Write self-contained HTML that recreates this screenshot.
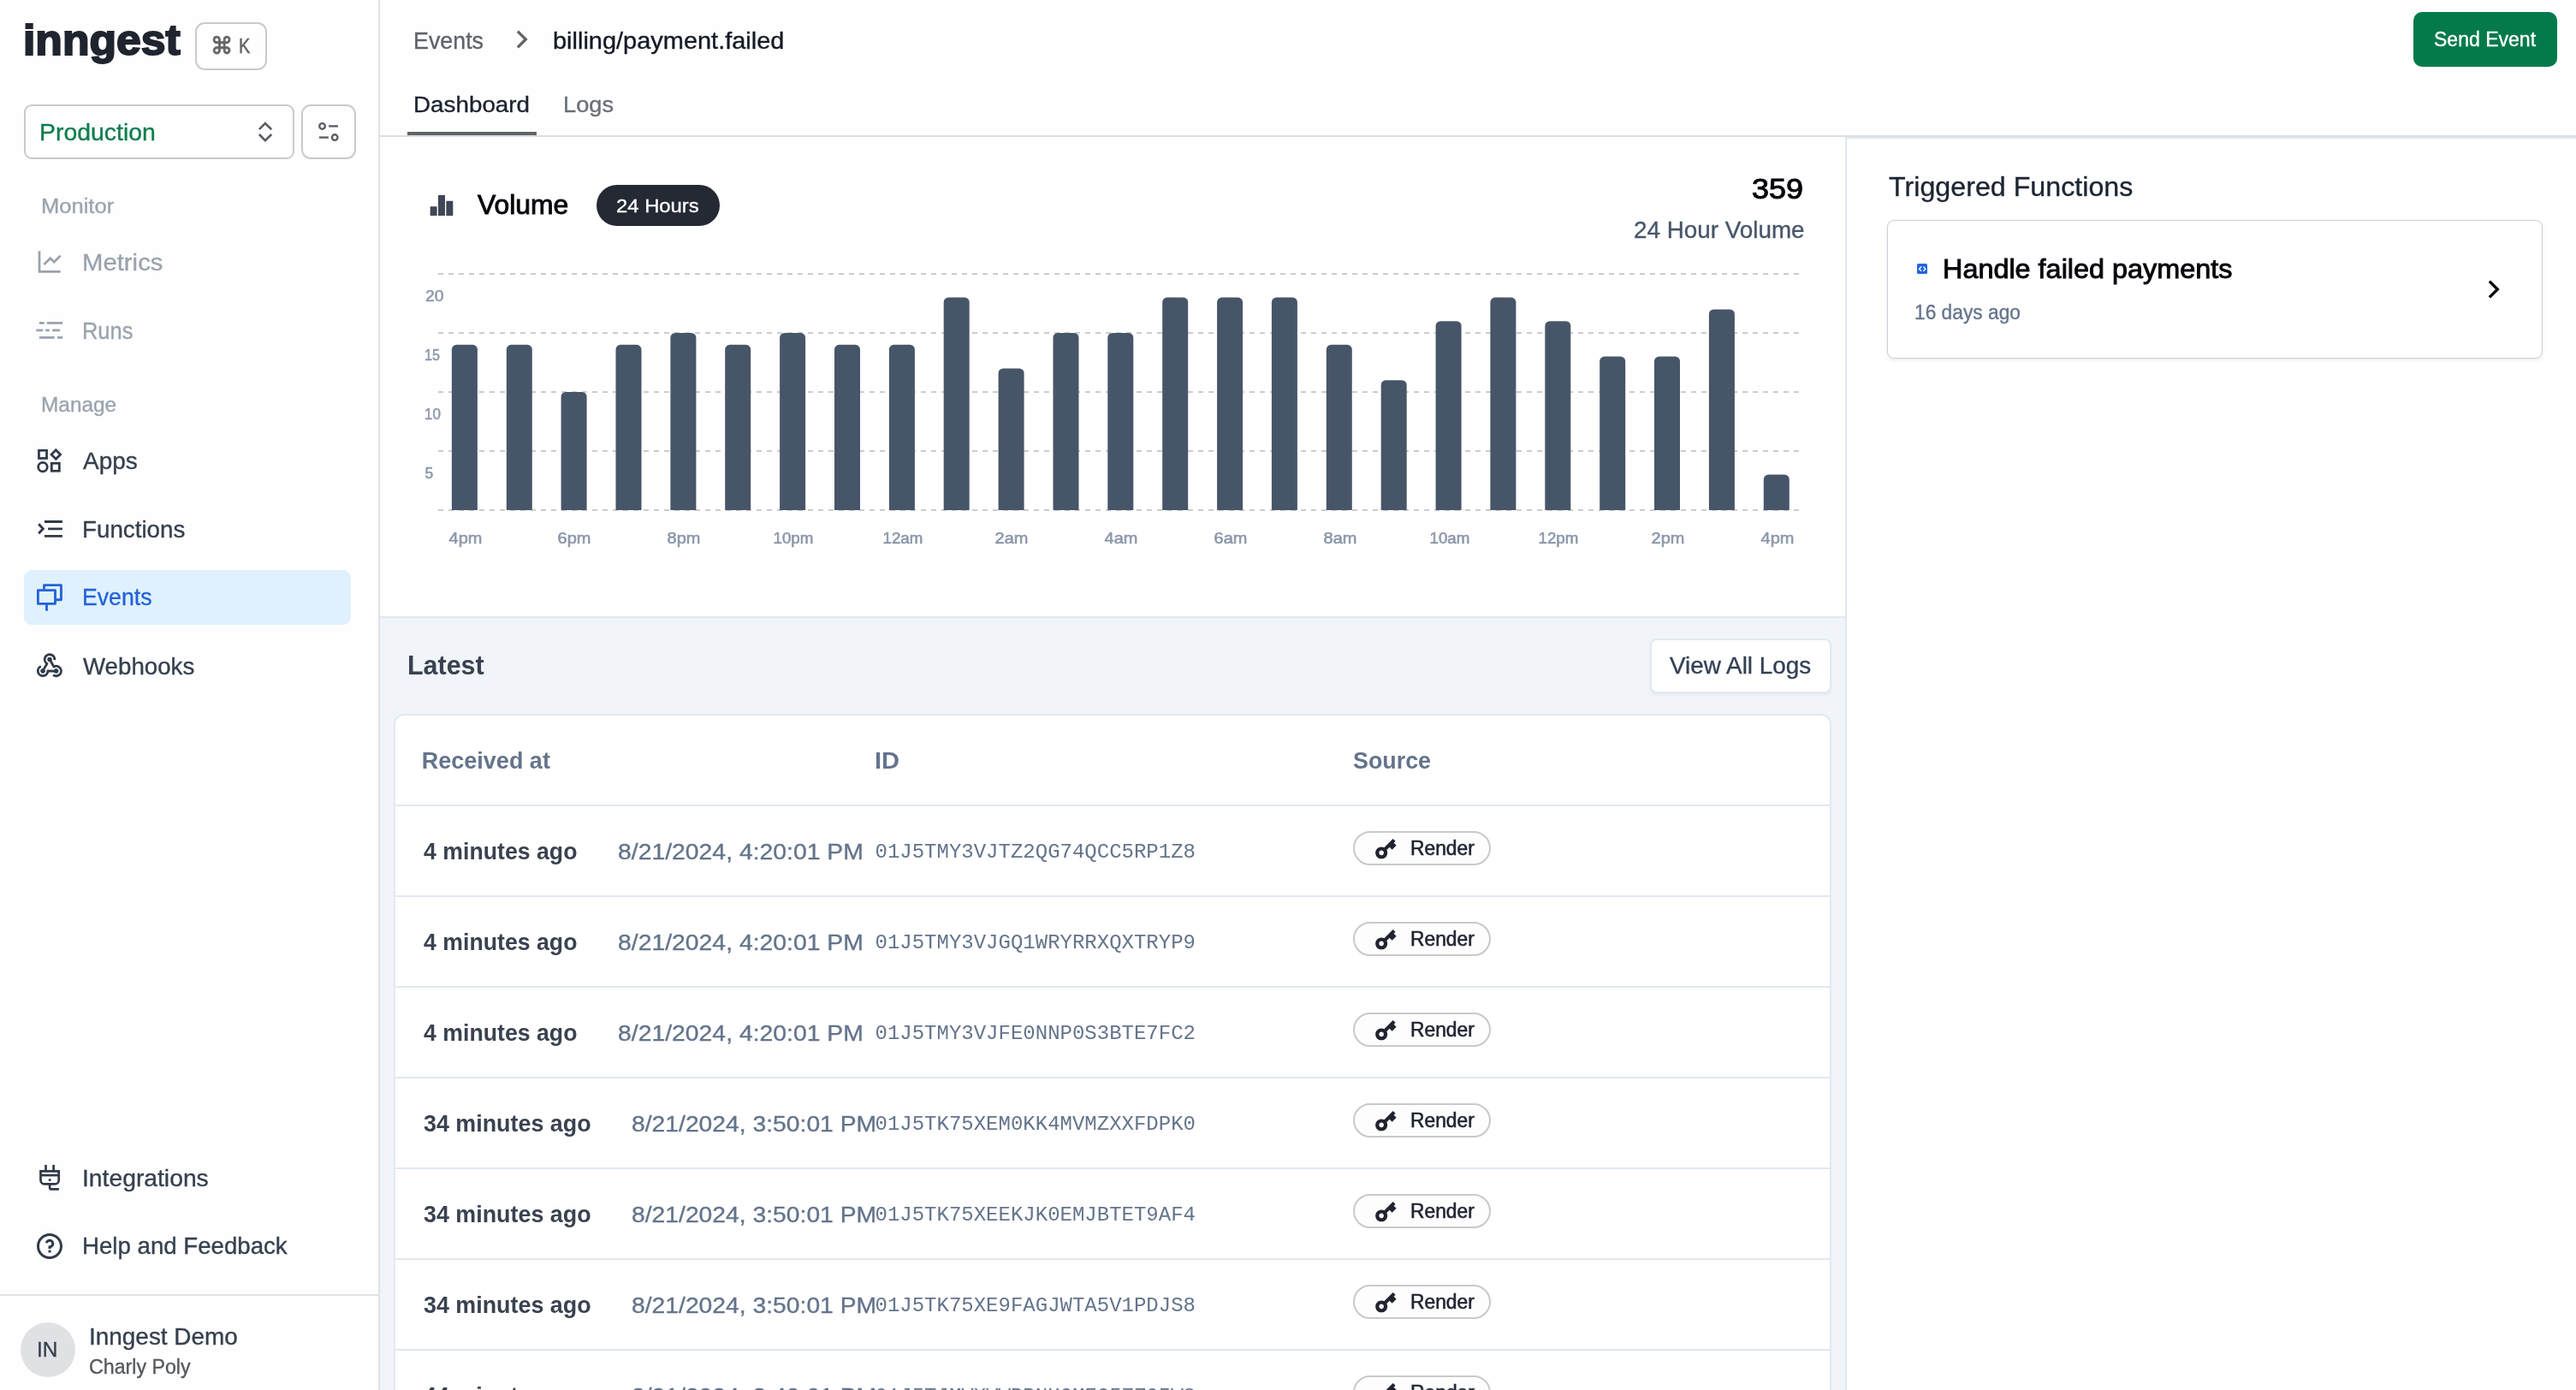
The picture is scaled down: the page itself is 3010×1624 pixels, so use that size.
<!DOCTYPE html>
<html lang="en"><head><meta charset="utf-8"><title>billing/payment.failed - Events - Inngest</title>
<style>
html,body{margin:0;padding:0}
body{width:3010px;height:1624px;position:relative;overflow:hidden;background:#fff;font-family:"Liberation Sans",sans-serif;-webkit-font-smoothing:antialiased}
.t{position:absolute;white-space:pre;line-height:1;margin:0;font-weight:400;transform-origin:0 50%}
.a{position:absolute;box-sizing:border-box}
svg{position:absolute;overflow:visible}
</style></head>
<body>
<div id="app" style="position:absolute;left:0;top:0;width:3010px;height:1624px;will-change:transform">
<aside>
<div class="a" style="left:0;top:0;width:444px;height:1624px;background:#fefefe;border-right:2px solid #dfe1e4"></div>
<div class="a" style="left:228px;top:26px;width:84px;height:56px;border:2px solid #c9cacd;border-radius:11px;background:#fefefe"></div>
<div class="a" style="left:28px;top:122px;width:316px;height:64px;border:2px solid #c9cacd;border-radius:9px;background:#fefefe"></div>
<svg style="left:298px;top:140px" width="24" height="28" viewBox="0 0 24 28" fill="none" stroke="#585c63" stroke-width="2.6"><path d="M4.9 11.2L11.9 4L19.2 11.2M4.9 17L11.9 24.2L19.2 17"/></svg>
<div class="a" style="left:352px;top:122px;width:64px;height:64px;border:2px solid #c9cacd;border-radius:11px;background:#fefefe"></div>
<svg style="left:370px;top:140px" width="28" height="28" viewBox="0 0 28 28" fill="none" stroke="#5a5e66" stroke-width="2.4"><circle cx="6.55" cy="7.4" r="3.3"/><path d="M14.1 7.4H25"/><circle cx="21.2" cy="20.6" r="3.3"/><path d="M3 20.6H13.9"/></svg>
<svg style="left:40px;top:288px;color:#9ba2ad" width="36" height="36" viewBox="0 0 36 36" fill="#9ba2ad"><g fill="none" stroke="currentColor" stroke-width="2.75"><path d="M6 5.2V29.3H30.7"/><path d="M11.4 21L18.8 13.7L23.2 18.1L30.6 10.8"/></g></svg>
<svg style="left:40px;top:368px;color:#9ba2ad" width="36" height="36" viewBox="0 0 36 36" fill="#9ba2ad"><g fill="none" stroke="currentColor" stroke-width="2.7"><path d="M5.8 9.4H11.7M14.8 9.4H33.2M2.3 17.9H10.2M13.2 17.9H17.8M21.2 17.9H30M5.8 26.4H23.7M27 26.4H33.2"/></g></svg>
<svg style="left:40px;top:520px;color:#303a48" width="36" height="36" viewBox="0 0 36 36" fill="#303a48"><g fill="none" stroke="currentColor" stroke-width="2.75"><rect x="5.45" y="6.25" width="9.1" height="9.2"/><path d="M25.3 5.7L30.6 11L25.3 16.3L20 11Z"/><circle cx="9.95" cy="25.6" r="5.3"/><rect x="20.3" y="21.25" width="9" height="9"/></g></svg>
<svg style="left:40px;top:600px;color:#303a48" width="36" height="36" viewBox="0 0 36 36" fill="#303a48"><g fill="none" stroke="currentColor" stroke-width="2.9"><path d="M12 9.45H32.9M16.1 17.9H32.9M12 26.4H32.9M5.2 12.3L10.3 17.8L5.2 23.3"/></g></svg>
<div class="a" style="left:28px;top:666px;width:382px;height:64px;border-radius:9px;background:#e0f1fe"></div>
<svg style="left:40px;top:680px;color:#2463d8" width="36" height="36" viewBox="0 0 36 36" fill="#2463d8"><g fill="none" stroke="currentColor" stroke-width="2.85" stroke-linejoin="round"><path d="M11.5 8.4V3.6H31.45V20.7H25.6"/><rect x="4.4" y="9.6" width="20.1" height="15.8"/><path d="M14.5 25.4V33.7"/></g></svg>
<svg style="left:40px;top:760px;color:#303a48" width="36" height="36" viewBox="0 0 36 36" fill="#303a48"><g fill="none" stroke="currentColor" stroke-width="2.8" stroke-linejoin="round"><path d="M23.76 11.1A5.8 5.8 0 1 0 15.01 15.37L9.9 23.9"/><circle cx="18" cy="10.4" r="2.75" fill="currentColor" stroke="none"/><g transform="rotate(-120 17.9 19.4)"><path d="M23.76 11.1A5.8 5.8 0 1 0 15.01 15.37L9.9 23.9"/><circle cx="18" cy="10.4" r="2.75" fill="currentColor" stroke="none"/></g><g transform="rotate(120 17.9 19.4)"><path d="M23.76 11.1A5.8 5.8 0 1 0 15.01 15.37L9.9 23.9"/><circle cx="18" cy="10.4" r="2.75" fill="currentColor" stroke="none"/></g></g></svg>
<svg style="left:40px;top:1358px;color:#303a48" width="36" height="36" viewBox="0 0 36 36" fill="#303a48"><g fill="none" stroke="currentColor" stroke-width="2.7"><path d="M13.5 3.1V10.4M22.6 3.1V10.4"/><path d="M7.5 10.4H28.7V20.9A4.5 4.5 0 0 1 24.2 25.4H12A4.5 4.5 0 0 1 7.5 20.9Z"/><path d="M7.5 15.1H28.7"/><path d="M18.16 25.4V29.9A1.5 1.5 0 0 0 19.66 31.4H28.9"/><circle cx="18.16" cy="20.4" r="1.5" fill="currentColor" stroke="none"/></g></svg>
<svg style="left:40px;top:1438px;color:#303a48" width="36" height="36" viewBox="0 0 36 36" fill="#303a48"><g transform="scale(1.5)"><path d="M12 22C6.47715 22 2 17.5228 2 12C2 6.47715 6.47715 2 12 2C17.5228 2 22 6.47715 22 12C22 17.5228 17.5228 22 12 22ZM12 20C16.4183 20 20 16.4183 20 12C20 7.58172 16.4183 4 12 4C7.58172 4 4 7.58172 4 12C4 16.4183 7.58172 20 12 20ZM11 15H13V17H11V15ZM13 13.3551V14H11V12.5C11 11.9477 11.4477 11.5 12 11.5C12.8284 11.5 13.5 10.8284 13.5 10C13.5 9.17157 12.8284 8.5 12 8.5C11.2723 8.5 10.6656 9.01823 10.5288 9.70577L8.56731 9.31346C8.88637 7.70919 10.302 6.5 12 6.5C13.933 6.5 15.5 8.067 15.5 10C15.5 11.5855 14.4457 12.9248 13 13.3551Z"/></g></svg>
<div class="a" style="left:0;top:1512px;width:442px;height:2px;background:#e1e3e6"></div>
<div class="a" style="left:24px;top:1545px;width:64px;height:64px;border-radius:32px;background:#e0e1e4"></div>
<span class="t" style="left:26.5px;top:22px;font-size:50px;color:#20242f;font-weight:700;transform:scaleX(1.0335);-webkit-text-stroke:2.0px #20242f;">inngest</span>
<span class="t" style="left:245.5px;top:40px;font-size:27.5px;color:#646569;font-family:'DejaVu Sans', 'Liberation Sans', sans-serif;transform:scaleX(0.9545);-webkit-text-stroke:0.9px #646569;">⌘</span>
<span class="t" style="left:279.3px;top:42px;font-size:23.77px;color:#646569;transform:scaleX(0.84);-webkit-text-stroke:0.5px #646569;">K</span>
<span class="t" style="left:45.8px;top:141px;font-size:27.16px;color:#0b7d4d;transform:scaleX(1.046);-webkit-text-stroke:0.35px #0b7d4d;">Production</span>
<h4 class="t" style="left:48.4px;top:230px;font-size:23.28px;color:#9ba3ae;transform:scaleX(1.0979);-webkit-text-stroke:0.35px #9ba3ae;">Monitor</h4>
<a class="t" style="left:96.0px;top:293px;font-size:27.16px;color:#9ba3ae;transform:scaleX(1.0792);-webkit-text-stroke:0.35px #9ba3ae;">Metrics</a>
<a class="t" style="left:96.3px;top:373px;font-size:27.16px;color:#9ba3ae;transform:scaleX(0.9364);-webkit-text-stroke:0.35px #9ba3ae;">Runs</a>
<h4 class="t" style="left:48.4px;top:462px;font-size:23.28px;color:#9ba3ae;transform:scaleX(1.0489);-webkit-text-stroke:0.35px #9ba3ae;">Manage</h4>
<a class="t" style="left:96.8px;top:525px;font-size:27.16px;color:#36404e;transform:scaleX(1.0315);-webkit-text-stroke:0.35px #36404e;">Apps</a>
<a class="t" style="left:96.1px;top:605px;font-size:27.16px;color:#36404e;transform:scaleX(1.0217);-webkit-text-stroke:0.35px #36404e;">Functions</a>
<a class="t" style="left:96.2px;top:684px;font-size:27.16px;color:#2463d8;transform:scaleX(0.9815);-webkit-text-stroke:0.35px #2463d8;">Events</a>
<a class="t" style="left:97.2px;top:765px;font-size:27.16px;color:#36404e;transform:scaleX(1.019);-webkit-text-stroke:0.35px #36404e;">Webhooks</a>
<a class="t" style="left:95.7px;top:1363px;font-size:27.16px;color:#36404e;transform:scaleX(1.0411);-webkit-text-stroke:0.35px #36404e;">Integrations</a>
<a class="t" style="left:95.7px;top:1442px;font-size:27.16px;color:#36404e;transform:scaleX(1.0176);-webkit-text-stroke:0.35px #36404e;">Help and Feedback</a>
<span class="t" style="left:43.3px;top:1565px;font-size:23.86px;color:#36404e;transform:scaleX(1.0204);-webkit-text-stroke:0.35px #36404e;">IN</span>
<span class="t" style="left:104.1px;top:1548px;font-size:27.16px;color:#36404e;transform:scaleX(1.0283);-webkit-text-stroke:0.35px #36404e;">Inngest Demo</span>
<span class="t" style="left:104.3px;top:1585px;font-size:24.25px;color:#55585e;transform:scaleX(0.9563);-webkit-text-stroke:0.35px #55585e;">Charly Poly</span>
</aside>
<header>
<div class="a" style="left:444px;top:0;width:2566px;height:160px;background:#fefefe;border-bottom:2px solid #dcdee1"></div>
<svg style="left:589.7px;top:25.7px" width="40" height="40" viewBox="0 0 24 24" fill="#626367"><path d="M13.1717 12.0007L8.22192 7.05093L9.63614 5.63672L16.0001 12.0007L9.63614 18.3646L8.22192 16.9504L13.1717 12.0007Z"/></svg>
<div class="a" style="left:476px;top:154px;width:151px;height:4px;background:#606368"></div>
<div class="a" style="left:2820px;top:14px;width:168px;height:64px;border-radius:10px;background:#047a4b"></div>
<a class="t" style="left:483.4px;top:34px;font-size:27.16px;color:#5e636b;transform:scaleX(0.9877);-webkit-text-stroke:0.35px #5e636b;">Events</a>
<span class="t" style="left:645.6px;top:34px;font-size:27.16px;color:#141a26;transform:scaleX(1.0662);-webkit-text-stroke:0.35px #141a26;">billing/payment.failed</span>
<a class="t" style="left:483.3px;top:109px;font-size:26.19px;color:#1c2230;transform:scaleX(1.0618);-webkit-text-stroke:0.35px #1c2230;">Dashboard</a>
<a class="t" style="left:658.1px;top:109px;font-size:26.19px;color:#6a6f78;transform:scaleX(1.0394);-webkit-text-stroke:0.35px #6a6f78;">Logs</a>
<a class="t" style="left:2844.2px;top:34px;font-size:23.77px;color:#ffffff;transform:scaleX(0.9687);-webkit-text-stroke:0.35px #ffffff;">Send Event</a>
</header>
<main>
<section>
<div class="a" style="left:444px;top:160px;width:1712px;height:562px;background:#fff;border-bottom:2px solid #e2e8f0"></div>
<svg style="left:500px;top:224px" width="32" height="32" viewBox="0 0 24 24" fill="#3f4756"><path d="M2 13H8V21H2V13ZM9 3H15V21H9V3ZM16 8H22V21H16V8Z"/></svg>
<div class="a" style="left:697px;top:216px;width:144px;height:48px;border-radius:24px;background:#242934"></div>
<svg class="chart" style="left:0;top:0" width="3010" height="700" viewBox="0 0 3010 700" role="img" aria-label="Event volume over the last 24 hours">
<g stroke="#cccccc" stroke-width="2" stroke-dasharray="6 6" fill="none"><line x1="512" x2="2102" y1="320" y2="320"/><line x1="512" x2="2102" y1="389" y2="389"/><line x1="512" x2="2102" y1="458" y2="458"/><line x1="512" x2="2102" y1="527" y2="527"/><line x1="512" x2="2102" y1="596" y2="596"/></g>
<g fill="#475569"><path d="M527.9 596V408.3a5.5 5.5 0 0 1 5.5 -5.5h19.0a5.5 5.5 0 0 1 5.5 5.5V596z"/><path d="M591.8 596V408.3a5.5 5.5 0 0 1 5.5 -5.5h19.0a5.5 5.5 0 0 1 5.5 5.5V596z"/><path d="M655.6 596V463.5a5.5 5.5 0 0 1 5.5 -5.5h19.0a5.5 5.5 0 0 1 5.5 5.5V596z"/><path d="M719.5 596V408.3a5.5 5.5 0 0 1 5.5 -5.5h19.0a5.5 5.5 0 0 1 5.5 5.5V596z"/><path d="M783.4 596V394.5a5.5 5.5 0 0 1 5.5 -5.5h19.0a5.5 5.5 0 0 1 5.5 5.5V596z"/><path d="M847.2 596V408.3a5.5 5.5 0 0 1 5.5 -5.5h19.0a5.5 5.5 0 0 1 5.5 5.5V596z"/><path d="M911.1 596V394.5a5.5 5.5 0 0 1 5.5 -5.5h19.0a5.5 5.5 0 0 1 5.5 5.5V596z"/><path d="M975.0 596V408.3a5.5 5.5 0 0 1 5.5 -5.5h19.0a5.5 5.5 0 0 1 5.5 5.5V596z"/><path d="M1038.9 596V408.3a5.5 5.5 0 0 1 5.5 -5.5h19.0a5.5 5.5 0 0 1 5.5 5.5V596z"/><path d="M1102.7 596V353.1a5.5 5.5 0 0 1 5.5 -5.5h19.0a5.5 5.5 0 0 1 5.5 5.5V596z"/><path d="M1166.6 596V435.9a5.5 5.5 0 0 1 5.5 -5.5h19.0a5.5 5.5 0 0 1 5.5 5.5V596z"/><path d="M1230.5 596V394.5a5.5 5.5 0 0 1 5.5 -5.5h19.0a5.5 5.5 0 0 1 5.5 5.5V596z"/><path d="M1294.3 596V394.5a5.5 5.5 0 0 1 5.5 -5.5h19.0a5.5 5.5 0 0 1 5.5 5.5V596z"/><path d="M1358.2 596V353.1a5.5 5.5 0 0 1 5.5 -5.5h19.0a5.5 5.5 0 0 1 5.5 5.5V596z"/><path d="M1422.1 596V353.1a5.5 5.5 0 0 1 5.5 -5.5h19.0a5.5 5.5 0 0 1 5.5 5.5V596z"/><path d="M1485.9 596V353.1a5.5 5.5 0 0 1 5.5 -5.5h19.0a5.5 5.5 0 0 1 5.5 5.5V596z"/><path d="M1549.8 596V408.3a5.5 5.5 0 0 1 5.5 -5.5h19.0a5.5 5.5 0 0 1 5.5 5.5V596z"/><path d="M1613.7 596V449.7a5.5 5.5 0 0 1 5.5 -5.5h19.0a5.5 5.5 0 0 1 5.5 5.5V596z"/><path d="M1677.6 596V380.7a5.5 5.5 0 0 1 5.5 -5.5h19.0a5.5 5.5 0 0 1 5.5 5.5V596z"/><path d="M1741.4 596V353.1a5.5 5.5 0 0 1 5.5 -5.5h19.0a5.5 5.5 0 0 1 5.5 5.5V596z"/><path d="M1805.3 596V380.7a5.5 5.5 0 0 1 5.5 -5.5h19.0a5.5 5.5 0 0 1 5.5 5.5V596z"/><path d="M1869.2 596V422.1a5.5 5.5 0 0 1 5.5 -5.5h19.0a5.5 5.5 0 0 1 5.5 5.5V596z"/><path d="M1933.0 596V422.1a5.5 5.5 0 0 1 5.5 -5.5h19.0a5.5 5.5 0 0 1 5.5 5.5V596z"/><path d="M1996.9 596V366.9a5.5 5.5 0 0 1 5.5 -5.5h19.0a5.5 5.5 0 0 1 5.5 5.5V596z"/><path d="M2060.8 596V560.1a5.5 5.5 0 0 1 5.5 -5.5h19.0a5.5 5.5 0 0 1 5.5 5.5V596z"/></g>
</svg>
<h2 class="t" style="left:557.9px;top:224px;font-size:30.55px;color:#05070c;transform:scaleX(1.0436);-webkit-text-stroke:0.9px #05070c;">Volume</h2>
<span class="t" style="left:720.1px;top:229px;font-size:22.79px;color:#ffffff;transform:scaleX(1.0462);-webkit-text-stroke:0.35px #ffffff;">24 Hours</span>
<span class="t" style="left:2046.7px;top:204px;font-size:33.46px;color:#05070c;transform:scaleX(1.0754);-webkit-text-stroke:1.0px #05070c;">359</span>
<span class="t" style="left:1908.5px;top:255px;font-size:27.16px;color:#475569;transform:scaleX(1.025);-webkit-text-stroke:0.35px #475569;">24 Hour Volume</span>
<span class="t" style="left:496.6px;top:338px;font-size:17.5px;color:#8d98aa;transform:scaleX(1.1098);-webkit-text-stroke:0.5px #8d98aa;">20</span>
<span class="t" style="left:495.6px;top:407px;font-size:17.5px;color:#8d98aa;transform:scaleX(0.9248);-webkit-text-stroke:0.5px #8d98aa;">15</span>
<span class="t" style="left:495.6px;top:476px;font-size:17.5px;color:#8d98aa;transform:scaleX(0.9716);-webkit-text-stroke:0.5px #8d98aa;">10</span>
<span class="t" style="left:496.6px;top:545px;font-size:17.5px;color:#8d98aa;-webkit-text-stroke:0.5px #8d98aa;">5</span>
<span class="t" style="left:526.7px;top:621px;font-size:17.5px;color:#8d98aa;transform:scaleX(1.14);-webkit-text-stroke:0.6px #8d98aa;transform-origin:50% 50%;">4pm</span>
<span class="t" style="left:654.4px;top:621px;font-size:17.5px;color:#8d98aa;transform:scaleX(1.14);-webkit-text-stroke:0.6px #8d98aa;transform-origin:50% 50%;">6pm</span>
<span class="t" style="left:782.2px;top:621px;font-size:17.5px;color:#8d98aa;transform:scaleX(1.14);-webkit-text-stroke:0.6px #8d98aa;transform-origin:50% 50%;">8pm</span>
<span class="t" style="left:905.0px;top:621px;font-size:17.5px;color:#8d98aa;transform:scaleX(1.07);-webkit-text-stroke:0.6px #8d98aa;transform-origin:50% 50%;">10pm</span>
<span class="t" style="left:1032.8px;top:621px;font-size:17.5px;color:#8d98aa;transform:scaleX(1.07);-webkit-text-stroke:0.6px #8d98aa;transform-origin:50% 50%;">12am</span>
<span class="t" style="left:1165.4px;top:621px;font-size:17.5px;color:#8d98aa;transform:scaleX(1.14);-webkit-text-stroke:0.6px #8d98aa;transform-origin:50% 50%;">2am</span>
<span class="t" style="left:1293.1px;top:621px;font-size:17.5px;color:#8d98aa;transform:scaleX(1.14);-webkit-text-stroke:0.6px #8d98aa;transform-origin:50% 50%;">4am</span>
<span class="t" style="left:1420.9px;top:621px;font-size:17.5px;color:#8d98aa;transform:scaleX(1.14);-webkit-text-stroke:0.6px #8d98aa;transform-origin:50% 50%;">6am</span>
<span class="t" style="left:1548.6px;top:621px;font-size:17.5px;color:#8d98aa;transform:scaleX(1.14);-webkit-text-stroke:0.6px #8d98aa;transform-origin:50% 50%;">8am</span>
<span class="t" style="left:1671.5px;top:621px;font-size:17.5px;color:#8d98aa;transform:scaleX(1.07);-webkit-text-stroke:0.6px #8d98aa;transform-origin:50% 50%;">10am</span>
<span class="t" style="left:1799.2px;top:621px;font-size:17.5px;color:#8d98aa;transform:scaleX(1.07);-webkit-text-stroke:0.6px #8d98aa;transform-origin:50% 50%;">12pm</span>
<span class="t" style="left:1931.8px;top:621px;font-size:17.5px;color:#8d98aa;transform:scaleX(1.14);-webkit-text-stroke:0.6px #8d98aa;transform-origin:50% 50%;">2pm</span>
<span class="t" style="left:2059.6px;top:621px;font-size:17.5px;color:#8d98aa;transform:scaleX(1.14);-webkit-text-stroke:0.6px #8d98aa;transform-origin:50% 50%;">4pm</span>
</section>
<section>
<div class="a" style="left:444px;top:722px;width:1712px;height:902px;background:#f1f5f9"></div>
<div class="a" style="left:1928px;top:746px;width:212px;height:64px;border:2px solid #e3e9f1;border-radius:8px;background:#fff;box-shadow:0 2px 3px rgba(15,23,42,.05)"></div>
<h2 class="t" style="left:475.9px;top:762px;font-size:30.5px;color:#3a4250;font-weight:700;">Latest</h2>
<a class="t" style="left:1950.9px;top:764px;font-size:27.16px;color:#334155;transform:scaleX(1.0259);-webkit-text-stroke:0.35px #334155;">View All Logs</a>
<div class="a" style="left:460px;top:834px;width:1680px;height:820px;border:2px solid #e2e8f0;border-radius:12px;background:#fff"></div>
<div class="a" style="left:462px;top:940px;width:1676px;height:2px;background:#e2e8f0"></div>
<span class="t" style="left:492.8px;top:876px;font-size:27px;color:#64748b;font-weight:700;">Received at</span>
<span class="t" style="left:1022.4px;top:876px;font-size:27px;color:#64748b;font-weight:700;transform:scaleX(1.0784);">ID</span>
<span class="t" style="left:1580.6px;top:876px;font-size:27px;color:#64748b;font-weight:700;transform:scaleX(0.9943);">Source</span>
<div class="row">
<div class="a" style="left:462px;top:1046px;width:1676px;height:2px;background:#e2e8f0"></div>
<div class="a" style="left:1581px;top:971px;width:160.5px;height:40px;border:2px solid #c8c9cc;border-radius:20px;background:#fdfdfe"></div>
<svg style="left:1602.8px;top:973.8px" width="33.5" height="33.5" viewBox="0 0 24 24" fill="#20242f"><path d="M10.3126 11.5656L17.6568 4.22144L19.7782 6.34276L18.3639 7.75697L20.4853 9.87829L16.9497 13.4138L14.8284 11.2925L12.4339 13.687C12.7956 14.3926 13 15.1925 13 16.04C13 18.8014 10.7614 21.04 8 21.04C5.23858 21.04 3 18.8014 3 16.04C3 13.2786 5.23858 11.04 8 11.04C8.84751 11.04 9.64741 11.2444 10.3126 11.5656ZM8 18.04C9.10457 18.04 10 17.1446 10 16.04C10 14.9354 9.10457 14.04 8 14.04C6.89543 14.04 6 14.9354 6 16.04C6 17.1446 6.89543 18.04 8 18.04Z"/></svg>
<span class="t" style="left:494.7px;top:982px;font-size:27px;color:#3a4250;font-weight:700;transform:scaleX(0.9887);">4 minutes ago</span>
<span class="t" style="left:722.2px;top:982px;font-size:26.58px;color:#64748b;transform:scaleX(1.0668);-webkit-text-stroke:0.35px #64748b;">8/21/2024, 4:20:01 PM</span>
<span class="t" style="left:1022.5px;top:984px;font-size:24px;color:#64748b;font-family:'Liberation Mono', monospace;">01J5TMY3VJTZ2QG74QCC5RP1Z8</span>
<span class="t" style="left:1648.1px;top:980px;font-size:23.28px;color:#1f2430;transform:scaleX(0.9807);-webkit-text-stroke:0.6px #1f2430;">Render</span>
</div><div class="row">
<div class="a" style="left:462px;top:1152px;width:1676px;height:2px;background:#e2e8f0"></div>
<div class="a" style="left:1581px;top:1077px;width:160.5px;height:40px;border:2px solid #c8c9cc;border-radius:20px;background:#fdfdfe"></div>
<svg style="left:1602.8px;top:1079.8px" width="33.5" height="33.5" viewBox="0 0 24 24" fill="#20242f"><path d="M10.3126 11.5656L17.6568 4.22144L19.7782 6.34276L18.3639 7.75697L20.4853 9.87829L16.9497 13.4138L14.8284 11.2925L12.4339 13.687C12.7956 14.3926 13 15.1925 13 16.04C13 18.8014 10.7614 21.04 8 21.04C5.23858 21.04 3 18.8014 3 16.04C3 13.2786 5.23858 11.04 8 11.04C8.84751 11.04 9.64741 11.2444 10.3126 11.5656ZM8 18.04C9.10457 18.04 10 17.1446 10 16.04C10 14.9354 9.10457 14.04 8 14.04C6.89543 14.04 6 14.9354 6 16.04C6 17.1446 6.89543 18.04 8 18.04Z"/></svg>
<span class="t" style="left:494.7px;top:1088px;font-size:27px;color:#3a4250;font-weight:700;transform:scaleX(0.9887);">4 minutes ago</span>
<span class="t" style="left:722.2px;top:1088px;font-size:26.58px;color:#64748b;transform:scaleX(1.0668);-webkit-text-stroke:0.35px #64748b;">8/21/2024, 4:20:01 PM</span>
<span class="t" style="left:1022.5px;top:1090px;font-size:24px;color:#64748b;font-family:'Liberation Mono', monospace;">01J5TMY3VJGQ1WRYRRXQXTRYP9</span>
<span class="t" style="left:1648.1px;top:1086px;font-size:23.28px;color:#1f2430;transform:scaleX(0.9807);-webkit-text-stroke:0.6px #1f2430;">Render</span>
</div><div class="row">
<div class="a" style="left:462px;top:1258px;width:1676px;height:2px;background:#e2e8f0"></div>
<div class="a" style="left:1581px;top:1183px;width:160.5px;height:40px;border:2px solid #c8c9cc;border-radius:20px;background:#fdfdfe"></div>
<svg style="left:1602.8px;top:1185.8px" width="33.5" height="33.5" viewBox="0 0 24 24" fill="#20242f"><path d="M10.3126 11.5656L17.6568 4.22144L19.7782 6.34276L18.3639 7.75697L20.4853 9.87829L16.9497 13.4138L14.8284 11.2925L12.4339 13.687C12.7956 14.3926 13 15.1925 13 16.04C13 18.8014 10.7614 21.04 8 21.04C5.23858 21.04 3 18.8014 3 16.04C3 13.2786 5.23858 11.04 8 11.04C8.84751 11.04 9.64741 11.2444 10.3126 11.5656ZM8 18.04C9.10457 18.04 10 17.1446 10 16.04C10 14.9354 9.10457 14.04 8 14.04C6.89543 14.04 6 14.9354 6 16.04C6 17.1446 6.89543 18.04 8 18.04Z"/></svg>
<span class="t" style="left:494.7px;top:1194px;font-size:27px;color:#3a4250;font-weight:700;transform:scaleX(0.9887);">4 minutes ago</span>
<span class="t" style="left:722.2px;top:1194px;font-size:26.58px;color:#64748b;transform:scaleX(1.0668);-webkit-text-stroke:0.35px #64748b;">8/21/2024, 4:20:01 PM</span>
<span class="t" style="left:1022.5px;top:1196px;font-size:24px;color:#64748b;font-family:'Liberation Mono', monospace;">01J5TMY3VJFE0NNP0S3BTE7FC2</span>
<span class="t" style="left:1648.1px;top:1192px;font-size:23.28px;color:#1f2430;transform:scaleX(0.9807);-webkit-text-stroke:0.6px #1f2430;">Render</span>
</div><div class="row">
<div class="a" style="left:462px;top:1364px;width:1676px;height:2px;background:#e2e8f0"></div>
<div class="a" style="left:1581px;top:1289px;width:160.5px;height:40px;border:2px solid #c8c9cc;border-radius:20px;background:#fdfdfe"></div>
<svg style="left:1602.8px;top:1291.8px" width="33.5" height="33.5" viewBox="0 0 24 24" fill="#20242f"><path d="M10.3126 11.5656L17.6568 4.22144L19.7782 6.34276L18.3639 7.75697L20.4853 9.87829L16.9497 13.4138L14.8284 11.2925L12.4339 13.687C12.7956 14.3926 13 15.1925 13 16.04C13 18.8014 10.7614 21.04 8 21.04C5.23858 21.04 3 18.8014 3 16.04C3 13.2786 5.23858 11.04 8 11.04C8.84751 11.04 9.64741 11.2444 10.3126 11.5656ZM8 18.04C9.10457 18.04 10 17.1446 10 16.04C10 14.9354 9.10457 14.04 8 14.04C6.89543 14.04 6 14.9354 6 16.04C6 17.1446 6.89543 18.04 8 18.04Z"/></svg>
<span class="t" style="left:494.7px;top:1300px;font-size:27px;color:#3a4250;font-weight:700;transform:scaleX(0.9951);">34 minutes ago</span>
<span class="t" style="left:738.3px;top:1300px;font-size:26.58px;color:#64748b;transform:scaleX(1.0638);-webkit-text-stroke:0.35px #64748b;">8/21/2024, 3:50:01 PM</span>
<span class="t" style="left:1022.5px;top:1302px;font-size:24px;color:#64748b;font-family:'Liberation Mono', monospace;">01J5TK75XEM0KK4MVMZXXFDPK0</span>
<span class="t" style="left:1648.1px;top:1298px;font-size:23.28px;color:#1f2430;transform:scaleX(0.9807);-webkit-text-stroke:0.6px #1f2430;">Render</span>
</div><div class="row">
<div class="a" style="left:462px;top:1470px;width:1676px;height:2px;background:#e2e8f0"></div>
<div class="a" style="left:1581px;top:1395px;width:160.5px;height:40px;border:2px solid #c8c9cc;border-radius:20px;background:#fdfdfe"></div>
<svg style="left:1602.8px;top:1397.8px" width="33.5" height="33.5" viewBox="0 0 24 24" fill="#20242f"><path d="M10.3126 11.5656L17.6568 4.22144L19.7782 6.34276L18.3639 7.75697L20.4853 9.87829L16.9497 13.4138L14.8284 11.2925L12.4339 13.687C12.7956 14.3926 13 15.1925 13 16.04C13 18.8014 10.7614 21.04 8 21.04C5.23858 21.04 3 18.8014 3 16.04C3 13.2786 5.23858 11.04 8 11.04C8.84751 11.04 9.64741 11.2444 10.3126 11.5656ZM8 18.04C9.10457 18.04 10 17.1446 10 16.04C10 14.9354 9.10457 14.04 8 14.04C6.89543 14.04 6 14.9354 6 16.04C6 17.1446 6.89543 18.04 8 18.04Z"/></svg>
<span class="t" style="left:494.7px;top:1406px;font-size:27px;color:#3a4250;font-weight:700;transform:scaleX(0.9951);">34 minutes ago</span>
<span class="t" style="left:738.3px;top:1406px;font-size:26.58px;color:#64748b;transform:scaleX(1.0638);-webkit-text-stroke:0.35px #64748b;">8/21/2024, 3:50:01 PM</span>
<span class="t" style="left:1022.5px;top:1408px;font-size:24px;color:#64748b;font-family:'Liberation Mono', monospace;">01J5TK75XEEKJK0EMJBTET9AF4</span>
<span class="t" style="left:1648.1px;top:1404px;font-size:23.28px;color:#1f2430;transform:scaleX(0.9807);-webkit-text-stroke:0.6px #1f2430;">Render</span>
</div><div class="row">
<div class="a" style="left:462px;top:1576px;width:1676px;height:2px;background:#e2e8f0"></div>
<div class="a" style="left:1581px;top:1501px;width:160.5px;height:40px;border:2px solid #c8c9cc;border-radius:20px;background:#fdfdfe"></div>
<svg style="left:1602.8px;top:1503.8px" width="33.5" height="33.5" viewBox="0 0 24 24" fill="#20242f"><path d="M10.3126 11.5656L17.6568 4.22144L19.7782 6.34276L18.3639 7.75697L20.4853 9.87829L16.9497 13.4138L14.8284 11.2925L12.4339 13.687C12.7956 14.3926 13 15.1925 13 16.04C13 18.8014 10.7614 21.04 8 21.04C5.23858 21.04 3 18.8014 3 16.04C3 13.2786 5.23858 11.04 8 11.04C8.84751 11.04 9.64741 11.2444 10.3126 11.5656ZM8 18.04C9.10457 18.04 10 17.1446 10 16.04C10 14.9354 9.10457 14.04 8 14.04C6.89543 14.04 6 14.9354 6 16.04C6 17.1446 6.89543 18.04 8 18.04Z"/></svg>
<span class="t" style="left:494.7px;top:1512px;font-size:27px;color:#3a4250;font-weight:700;transform:scaleX(0.9951);">34 minutes ago</span>
<span class="t" style="left:738.3px;top:1512px;font-size:26.58px;color:#64748b;transform:scaleX(1.0638);-webkit-text-stroke:0.35px #64748b;">8/21/2024, 3:50:01 PM</span>
<span class="t" style="left:1022.5px;top:1514px;font-size:24px;color:#64748b;font-family:'Liberation Mono', monospace;">01J5TK75XE9FAGJWTA5V1PDJS8</span>
<span class="t" style="left:1648.1px;top:1510px;font-size:23.28px;color:#1f2430;transform:scaleX(0.9807);-webkit-text-stroke:0.6px #1f2430;">Render</span>
</div><div class="row">
<div class="a" style="left:462px;top:1682px;width:1676px;height:2px;background:#e2e8f0"></div>
<div class="a" style="left:1581px;top:1607px;width:160.5px;height:40px;border:2px solid #c8c9cc;border-radius:20px;background:#fdfdfe"></div>
<svg style="left:1602.8px;top:1609.8px" width="33.5" height="33.5" viewBox="0 0 24 24" fill="#20242f"><path d="M10.3126 11.5656L17.6568 4.22144L19.7782 6.34276L18.3639 7.75697L20.4853 9.87829L16.9497 13.4138L14.8284 11.2925L12.4339 13.687C12.7956 14.3926 13 15.1925 13 16.04C13 18.8014 10.7614 21.04 8 21.04C5.23858 21.04 3 18.8014 3 16.04C3 13.2786 5.23858 11.04 8 11.04C8.84751 11.04 9.64741 11.2444 10.3126 11.5656ZM8 18.04C9.10457 18.04 10 17.1446 10 16.04C10 14.9354 9.10457 14.04 8 14.04C6.89543 14.04 6 14.9354 6 16.04C6 17.1446 6.89543 18.04 8 18.04Z"/></svg>
<span class="t" style="left:494.7px;top:1618px;font-size:27px;color:#3a4250;font-weight:700;transform:scaleX(0.9951);">44 minutes ago</span>
<span class="t" style="left:738.3px;top:1618px;font-size:26.58px;color:#64748b;transform:scaleX(1.0638);-webkit-text-stroke:0.35px #64748b;">8/21/2024, 3:40:01 PM</span>
<span class="t" style="left:1022.5px;top:1620px;font-size:24px;color:#64748b;font-family:'Liberation Mono', monospace;">01J5TJMVXVWBBNHGMFG5ZZ05W8</span>
<span class="t" style="left:1648.1px;top:1616px;font-size:23.28px;color:#1f2430;transform:scaleX(0.9807);-webkit-text-stroke:0.6px #1f2430;">Render</span>
</div>
</section>
<section>
<div class="a" style="left:2156px;top:160px;width:854px;height:1464px;background:#fff;border-left:2px solid #e2e8f0;border-top:2px solid #e2e8f0"></div>
<div class="a" style="left:2205px;top:257px;width:766px;height:162px;border:1px solid #cccfd4;border-radius:8px;background:#fff;box-shadow:0 2px 4px rgba(30,50,90,.09)"></div>
<div class="a" style="left:2239.8px;top:307.8px;width:12.4px;height:12.4px;border-radius:1.6px;background:#2467db"></div>
<svg style="left:2239.8px;top:307.8px" width="12.4" height="12.4" viewBox="0 0 12.4 12.4" fill="none" stroke="#fff" stroke-width="1.35"><path d="M5.1 3.6L2.5 6.2L5.1 8.8M7.4 3.6L9.9 6.2L7.4 8.8"/></svg>
<svg style="left:2893.8px;top:317.9px" width="40" height="40" viewBox="0 0 24 24" fill="#05070c"><path d="M13.1717 12.0007L8.22192 7.05093L9.63614 5.63672L16.0001 12.0007L9.63614 18.3646L8.22192 16.9504L13.1717 12.0007Z"/></svg>
<h2 class="t" style="left:2206.6px;top:203px;font-size:31.04px;color:#1d2533;transform:scaleX(1.0385);-webkit-text-stroke:0.35px #1d2533;">Triggered Functions</h2>
<h3 class="t" style="left:2270.2px;top:299px;font-size:31.04px;color:#05070c;transform:scaleX(1.0436);-webkit-text-stroke:0.9px #05070c;">Handle failed payments</h3>
<span class="t" style="left:2237.2px;top:354px;font-size:23.28px;color:#64748b;transform:scaleX(0.9777);-webkit-text-stroke:0.35px #64748b;">16 days ago</span>
</section>
</main>
</div>
</body></html>
